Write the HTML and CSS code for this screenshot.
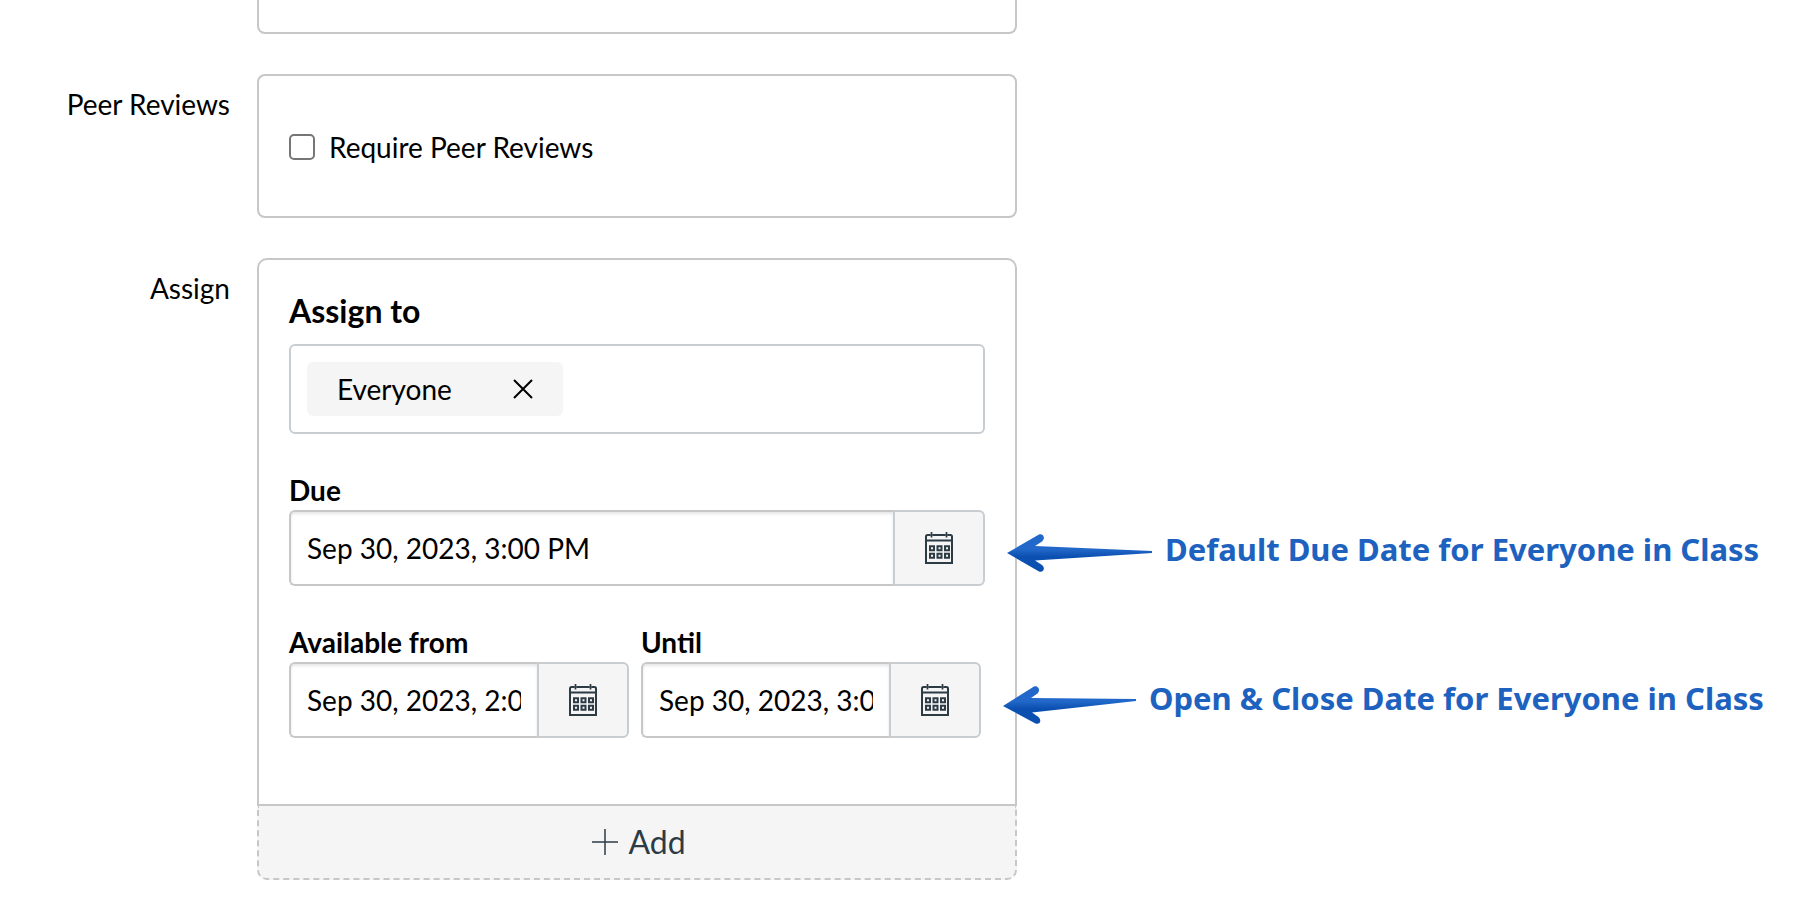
FILE: index.html
```html
<!DOCTYPE html>
<html lang="en">
<head>
<meta charset="utf-8">
<title>Edit Assignment</title>
<link rel="stylesheet" href="styles.css">
</head>
<body>
<svg class="defs" width="0" height="0" aria-hidden="true">
  <defs>
    <linearGradient id="arrow-fill" x1="0" y1="0" x2="0" y2="1">
      <stop offset="0.4" stop-color="#2268ca"/>
      <stop offset="0.6" stop-color="#0b50b0"/>
    </linearGradient>
    <symbol id="calendar" viewBox="0 0 28 32">
      <g fill="none" stroke="#2d3b45" stroke-width="2">
        <path d="M5 3H2.500Q1 3 1 4.500V31H27V4.500Q27 3 25.500 3H23M8 3H20M1 8.500H27" stroke-width="2"/>
        <path d="M6.500 0V5.500M21.500 0V5.500M5 3H23" stroke-width="1.700"/>
        <path d="M5 14.200h4v4h-4zM12.500 14.200h4v4h-4zM20 14.200h4v4h-4zM5 21.700h4v4h-4zM12.500 21.700h4v4h-4zM20 21.700h4v4h-4z" stroke-width="2"/>
      </g>
    </symbol>
  </defs>
</svg>
<form class="form">
  <div class="card card-cut"></div>

  <span class="row-label" id="peer-label">Peer Reviews</span>
  <div class="card peer" role="group" aria-labelledby="peer-label">
    <input type="checkbox" id="peer" class="checkbox">
    <label for="peer">Require Peer Reviews</label>
  </div>

  <span class="row-label" id="assign-label">Assign</span>
  <div role="group" aria-labelledby="assign-label">
    <div class="card assign">
      <h2 class="heading">Assign to</h2>
      <div class="tokens">
        <span class="token">Everyone
          <button type="button" class="remove" aria-label="Remove Everyone">
            <svg width="20" height="20" viewBox="0 0 20 20"><path d="M1 1L19 19M19 1L1 19" stroke="#000" stroke-width="2"/></svg>
          </button>
        </span>
      </div>

      <div class="field">
        <label class="field-label" for="due">Due</label>
        <div class="date">
          <input type="text" id="due" class="date-input" value="Sep 30, 2023, 3:00 PM">
          <button type="button" class="date-button" aria-label="Choose due date"><svg width="28" height="32"><use href="#calendar"/></svg></button>
          <div class="note note-due">
            <svg width="146" height="38" viewBox="0 0 146 38"><path fill="url(#arrow-fill)" d="M0 19L32 .5C36 -1 39 4 35 7.500L28 12L145 17V19L28 26.500L35 31C39 34.500 36 39 32 37.500Z"/></svg>
            <span>Default Due Date for Everyone in Class</span>
          </div>
        </div>
      </div>

      <div class="range">
        <div>
          <label class="field-label" for="from">Available from</label>
          <div class="date">
            <input type="text" id="from" class="date-input" value="Sep 30, 2023, 2:00 PM">
            <button type="button" class="date-button" aria-label="Choose start date"><svg width="28" height="32"><use href="#calendar"/></svg></button>
          </div>
        </div>
        <div>
          <label class="field-label" for="until">Until</label>
          <div class="date">
            <input type="text" id="until" class="date-input" value="Sep 30, 2023, 3:00 PM">
            <button type="button" class="date-button" aria-label="Choose end date"><svg width="28" height="32"><use href="#calendar"/></svg></button>
            <div class="note note-range">
              <svg width="134" height="38" viewBox="0 0 134 38"><path fill="url(#arrow-fill)" d="M0 20L31 .5C35 -1 38 4 34.500 7.500L28 12L133 13V15L29 26.500L35.500 31C39 34.500 37 39 32.500 37.500Z"/></svg>
              <span>Open &amp; Close Date for Everyone in Class</span>
            </div>
          </div>
        </div>
      </div>
    </div>
    <button type="button" class="add">
      <svg width="26" height="26" viewBox="0 0 26 26" aria-hidden="true"><path d="M13 0V26M0 13H26" stroke="#2d3b45" stroke-width="1.500"/></svg>
      Add
    </button>
  </div>
</form>
</body>
</html>
```
FILE: styles.css
```css
* { box-sizing: border-box; }

body {
  margin: 0;
  background: #fff;
  color: #000;
  font-family: Lato, "Open Sans", sans-serif;
  font-size: 28px;
  line-height: 36px;
}

input, button { font: inherit; color: inherit; margin: 0; }

.defs { position: absolute; }

.form {
  display: grid;
  grid-template-columns: 230px minmax(0, 760px);
  column-gap: 27px;
  row-gap: 40px;
  padding-bottom: 38px;
}

.row-label { padding-top: 12px; text-align: right; }

.card {
  grid-column: 2;
  border: 2px solid #c7c7c7;
  border-radius: 8px;
}

.card-cut {
  height: 34px;
  border-top: 0;
  border-radius: 0 0 8px 8px;
}

.peer {
  display: flex;
  align-items: center;
  gap: 14px;
  padding: 53px 30px 51px;
}

.checkbox {
  appearance: none;
  width: 26px;
  height: 26px;
  border: 2px solid #767676;
  border-radius: 5px;
  background: #fff;
}

.assign {
  padding: 31px 30px 66px;
  border-radius: 10px 10px 0 0;
}

.heading {
  margin: 0 0 13px;
  font-size: 32px;
  line-height: 40px;
  font-weight: 700;
}

.tokens {
  padding: 16px;
  border: 2px solid #c7cdd1;
  border-radius: 6px;
  display: flex;
}

.token {
  display: flex;
  align-items: center;
  gap: 61px;
  height: 54px;
  padding: 0 30px;
  background: #f5f5f5;
  border-radius: 6px;
}

.remove {
  display: flex;
  padding: 0;
  border: 0;
  background: none;
}

.field { margin-top: 38px; }

.field-label {
  display: block;
  padding-bottom: 2px;
  font-weight: 700;
}

.date {
  position: relative;
  display: flex;
  height: 76px;
}

.date-input {
  flex: 1;
  min-width: 0;
  padding: 0 16px;
  border: 2px solid #c7c7c7;
  border-right: 0;
  border-radius: 6px 0 0 6px;
  background: #fff;
  box-shadow: inset 0 2px 3px rgba(0, 0, 0, 0.1);
}

.date-button {
  display: flex;
  align-items: center;
  justify-content: center;
  width: 92px;
  padding: 0;
  border: 2px solid #c7cdd1;
  border-radius: 0 6px 6px 0;
  background: #f5f5f5;
}

.range {
  display: grid;
  grid-template-columns: repeat(2, minmax(0, 1fr));
  gap: 12px;
  margin: 38px 4px 0 0;
}

/* Callouts that lie over the card's right edge */
.note {
  position: absolute;
  left: 100%;
  display: flex;
  align-items: flex-start;
  gap: 12px;
  margin-left: 22px;
  color: #1e62c0;
  font-family: "Noto Sans", sans-serif;
  font-size: 31px;
  font-weight: 700;
  white-space: nowrap;
}

.note svg { flex: none; }
.note-due { top: 21px; }
.note-due svg { margin-top: 3px; }
.note-range { top: 18px; }
.note-range svg { margin-top: 6px; }

.add {
  display: flex;
  align-items: center;
  justify-content: center;
  gap: 10px;
  width: 100%;
  height: 74px;
  padding: 0 0 0 4px;
  border: 2px dashed #c7c7c7;
  border-top: 0;
  border-radius: 0 0 10px 10px;
  background: #f5f5f5;
  color: #2d3b45;
  font-size: 32px;
}
```
